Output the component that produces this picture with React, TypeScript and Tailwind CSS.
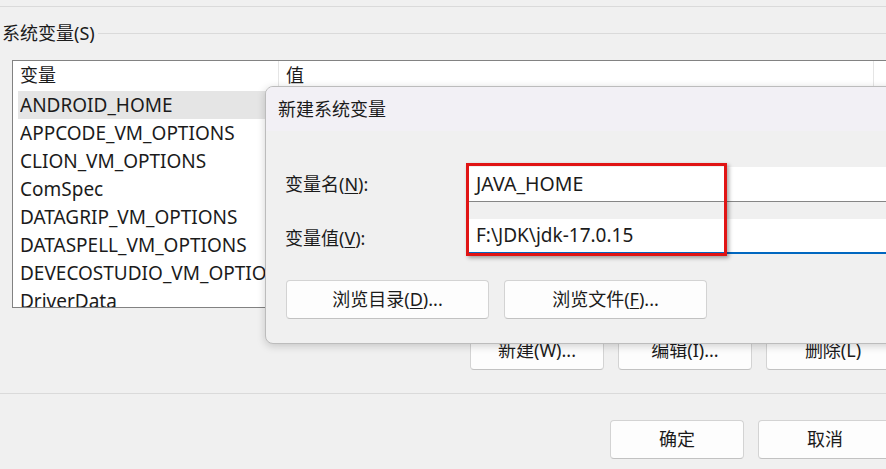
import React from 'react';

const variables = [
  'ANDROID_HOME',
  'APPCODE_VM_OPTIONS',
  'CLION_VM_OPTIONS',
  'ComSpec',
  'DATAGRIP_VM_OPTIONS',
  'DATASPELL_VM_OPTIONS',
  'DEVECOSTUDIO_VM_OPTIONS',
  'DriverData',
  'GATEWAY_VM_OPTIONS',
];

const WinButton: React.FC<{ className?: string; children: React.ReactNode }> = ({ className = '', children }) => (
  <button
    className={`h-[39px] shrink-0 rounded-[4px] border border-[#d3d3d3] border-b-[#c2c2c2] bg-[#fdfdfd] text-[18px] text-[#1b1b1b] ${className}`}
  >
    {children}
  </button>
);

const NewVariableDialog: React.FC = () => (
  <div className="absolute left-[265px] top-[86px] h-[258px] w-[660px] overflow-hidden rounded-[8px] border border-[#bcbcbc] bg-[#f0f0f0] shadow-[0_2px_8px_rgba(0,0,0,0.18)]">
    <div className="flex h-[44px] items-center bg-[#f2f0f5] pl-[12px] text-[18px]">新建系统变量</div>
    <div className="flex flex-col pl-[19px] pt-[36px]">
      <div className="flex h-[35px] items-center">
        <span className="w-[184px] text-[18px]">
          变量名(<span className="underline underline-offset-2">N</span>):
        </span>
        <div className="flex h-full flex-1 items-center border-b border-[#868686] bg-white pl-[7px] text-[19.5px]">
          JAVA_HOME
        </div>
      </div>
      <div className="mt-[17px] flex h-[35px] items-center">
        <span className="w-[184px] pt-[4px] text-[18px]">
          变量值(<span className="underline underline-offset-2">V</span>):
        </span>
        <div className="flex h-full flex-1 items-center border-b-2 border-[#0067c0] bg-white pl-[7px] text-[19px]">
          F:\JDK\jdk-17.0.15
        </div>
      </div>
      <div className="mt-[26px] flex gap-[15px] pl-[1px]">
        <WinButton className="w-[203px]">
          浏览目录(<span className="underline underline-offset-2">D</span>)...
        </WinButton>
        <WinButton className="w-[203px]">
          浏览文件(<span className="underline underline-offset-2">F</span>)...
        </WinButton>
      </div>
    </div>
    <div className="pointer-events-none absolute left-[200px] top-[76px] h-[93px] w-[261px] border-[3px] border-[#e01414] shadow-[2px_2px_4px_rgba(0,0,0,0.35)]" />
  </div>
);

export default function App() {
  return (
    <div
      className="relative h-[469px] w-[886px] overflow-hidden bg-[#f0f0f0] text-[#1b1b1b]"
      style={{ fontFamily: '"Noto Sans", "Noto Sans CJK SC", sans-serif' }}
    >
      <div className="pt-[6px]">
        <div className="h-px bg-[#dadada]" />
      </div>
      <div className="mt-[15px] flex items-center">
        <span className="pl-[2px] pr-[3px] text-[18px] leading-[22px]">系统变量(S)</span>
        <div className="h-px flex-1 bg-[#dadada]" />
      </div>
      <div className="ml-[12px] mt-[16px] h-[248px] w-[900px] overflow-hidden border border-[#828282] bg-white">
        <div className="flex h-[30px] items-start text-[18px]">
          <div className="h-[26px] w-[266px] border-r border-[#e5e5e5] pl-[7px] leading-[28px]">变量</div>
          <div className="h-[26px] w-[595px] border-r border-[#e5e5e5] pl-[7px] leading-[28px]">值</div>
        </div>
        <div className="flex flex-col px-[5px]">
          {variables.map((name, idx) => (
            <div
              key={name}
              className={`flex h-[28px] items-center pl-[2px] text-[19px] ${idx === 0 ? 'bg-[#e5e5e5]' : ''}`}
            >
              <span className="w-[246px] overflow-hidden whitespace-nowrap">
                {name === 'DEVECOSTUDIO_VM_OPTIONS' ? 'DEVECOSTUDIO_VM_OPTIO.' : name}
              </span>
            </div>
          ))}
        </div>
      </div>
      <div className="mt-[23px] flex gap-[14px] pl-[470px]">
        <WinButton className="w-[134px]">新建(W)...</WinButton>
        <WinButton className="w-[134px]">编辑(I)...</WinButton>
        <WinButton className="w-[134px]">删除(L)</WinButton>
      </div>
      <div className="mt-[23px] h-px bg-[#dadada]" />
      <div className="mt-[26px] flex gap-[14px] pl-[610px]">
        <WinButton className="w-[134px]">确定</WinButton>
        <WinButton className="w-[134px]">取消</WinButton>
      </div>
      <NewVariableDialog />
    </div>
  );
}
